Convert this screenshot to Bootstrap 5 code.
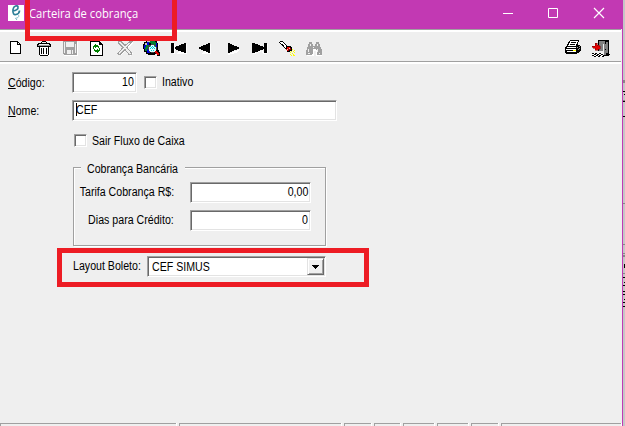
<!DOCTYPE html>
<html lang="pt-BR">
<head>
<meta charset="utf-8">
<title>Carteira de cobrança</title>
<link href="https://cdn.jsdelivr.net/npm/bootstrap@5.3.0/dist/css/bootstrap.min.css" rel="stylesheet">
<style>
html,body{height:426px;overflow:hidden}
body{background:#c6c6c6;font:12.5px/16px "Liberation Sans",Arial,sans-serif;color:#000}
.win{width:623px;height:426px;background:#efefef;border-right:1px solid #c239b3}
.titlebar{height:29px;width:623px;background:#c239b3;color:#fff}
.app-logo{margin:4px 5px 0 8px}
.win-buttons{margin:5px 13px 0 auto}
.caption{font:12px/16px "Open Sans",sans-serif;margin-top:-2px;transform-origin:left;transform:scaleX(.935)}
.tools{height:35px;border-top:1px solid #a0a0a0;border-bottom:2px solid #fff;box-shadow:inset 0 2px #fff,inset 0 -1px #a0a0a0;padding:4px 10px 0 8px;gap:9px;margin-right:1px}
svg{display:block;flex:none}
.tools svg{shape-rendering:crispEdges}
.t,.tr{display:inline-block;white-space:nowrap;transform:scaleX(.85);transform-origin:left}
.tr{transform-origin:right}
.line{height:28px}
.key{width:64px}
.field{height:21px;background:#fff;border:1px solid;border-color:#a0a0a0 #fff #fff #a0a0a0;box-shadow:inset 1px 1px #696969,inset -1px -1px #e3e3e3;padding:1px 2px 0}
.raise{margin-top:-2px}
.combo{padding-top:2px}
.tick{width:13px;height:13px;background:#fff;border:1px solid;border-color:#a0a0a0 #fff #fff #a0a0a0;box-shadow:inset 1px 1px #696969,inset -1px -1px #e3e3e3;flex:none}
.caret{width:1px;height:13px;background:#000;margin:1px -1px 0 1px}
.group{margin:10px 0 0 73px;width:253px;height:79px;border:1px solid #a0a0a0;box-shadow:1px 1px #fff,inset 1px 1px #fff}
.legend-text{width:104px;height:16px;margin:-7px 0 0 7px;padding-left:6px;background:#efefef}
.drop{width:17px;height:17px;background:#efefef;border:1px solid;border-color:#e3e3e3 #696969 #696969 #e3e3e3;box-shadow:inset 1px 1px #fff,inset -1px -1px #a0a0a0;margin:-1px -1px 0 0}
.status{height:3px;gap:3px;width:621px}
.status>div{border-top:1px solid #a0a0a0;border-left:1px solid #a0a0a0;box-shadow:1px 0 #fff}
.mark-a,.mark-b{position:absolute;border:5px solid #ed1c24}
.mark-a{left:25px;top:-6px;width:152px;height:47px}
.mark-b{left:57px;top:248px;width:312px;height:39px}
.behind{position:absolute;left:623px;top:0;shape-rendering:crispEdges}
</style>
<script src="https://cdn.jsdelivr.net/npm/bootstrap@5.3.0/dist/js/bootstrap.bundle.min.js"></script>
</head>
<body>
<div class="win d-flex flex-column">
 <header class="titlebar d-flex align-items-center flex-shrink-0">
  <svg class="app-logo align-self-start" width="16" height="17" viewBox="0 0 16 17"><path fill="#fff" d="M0 1h16v16H0z"/><g fill="none" stroke="#2d7f98"><path stroke-width="1.7" d="M5 7C8 7 10.500 5 10 2.700 9.500 1 5.500 1.500 5 5.500 4.500 9.500 6 11 8 10.500 10 10 11.500 8 11.500 6.500"/><path stroke="#7db5c7" d="M10.500 11c1 2-1 3-3 3.300l1.500 1.700"/></g></svg>
  <div class="caption text-nowrap">Carteira de cobrança</div>
  <svg class="win-buttons align-self-start" width="110" height="16" viewBox="500 5 110 16" fill="none" stroke="#fff"><path d="M503 13.500h10M548.500 8.500h9v9h-9z"/><path stroke-width="1.200" d="m594 8 10 10m0-10-10 10"/></svg>
 </header>
 <nav class="tools d-flex align-items-center flex-shrink-0">
  <svg width="18" height="18"><path fill="#000" d="M2 2h8v1h1v1h1v1h1v10H2z"/><path fill="#fff" d="M3 3h6v3h3v8H3z"/><path d="M10 4h1v1h-1z" fill="#fff"/></svg>
  <svg width="18" height="18"><path fill="#fff" d="M4 8h11v9H5z"/><path d="M7 2h4v1h1v1h3v1h1v3H2V5h1V4h3V3h1z"/><path fill="#efefef" d="M7 3h4v1H7zM4 5h10v1H4z"/><path fill="#999" d="M3 6h12v1H3z"/><path d="M4 8h1v8H4zm9 0h1v8h-1zM5 16h8v1H5zM6 9h1v6H6zm2 0h1v6H8zm3 0h1v6h-1z"/></svg>
  <svg width="18" height="18"><path fill="#fff" d="M2 3h14v14H2z"/><path fill="#a0a0a0" d="M1 2h14v14H2v-1H1z"/><path fill="#efefef" d="M2 3h1v11H2zM4 3h8v5H4zM13 5h1v9h-1zM5 11h4v4H5zM10 11h1v4h-1z"/></svg>
  <svg width="18" height="18"><path d="M1 2h10v1h1v1h1v1h1v12H1z"/><path fill="#fff" d="M2 3h8v3h3v10H2z"/><path fill="#008000" d="M6 5h1v1h2v1h1v2H9V8H7v1H6V8H5v2H4V7h1V6h1zM8 10h1v1h1V9h1v3h-1v1H9v1H8v-1H6v-1H5v-2h1v1h2z"/></svg>
  <svg width="18" height="18"><path fill="none" stroke="#fff" stroke-width="4" d="m4 4 12 12M16 3 4 15"/><path fill="#efefef" stroke="#a0a0a0" d="M2 2.500h3l4 4 5-4h2l-5 6 4 5v2h-2l-4-5-5 5H3l-1-1 5-6-5-5z"/></svg>
  <svg width="18" height="18"><path d="M4 1h8v1h2v2h1v7h1v2h1v4h-3v-2h-2v1H5v-1H3v-2H1v-3H0V5h1V3h2V2h1z"/><path fill="#0000d8" d="M4 2h3v2H6v2H5v3h2v5H4v-2H2v-2H1V6h1V4h2zM12 3h1v1h1v4h-1V6h-1z"/><path fill="#008030" d="M7 2h5v1h1v3h-2V5H8V4H6V3h1zM3 6h3v4H4v2H2V8h1z"/><path fill="#c6c6c6" d="M4 2h3v1H4zM2 4h2v2H2z"/><circle cx="9.500" cy="9.500" r="4" fill="#dff" stroke="#444"/><path fill="#00cfd8" d="M7 7h1v1H7zm2 0h1v1H9zm2 0h1v1h-1zM8 8h1v1H8zm2 0h1v1h-1zM7 9h1v1H7zm2 0h1v1H9zm2 0h1v1h-1zm-3 2h1v1H8zm2 0h1v1h-1z"/><path fill="#e00000" d="M12 12h2v1h1v1h1v2h-2v-1h-1v-1h-1z"/></svg>
  <svg width="18" height="18"><path fill="#fff" d="M3 5h2v10H3zM16 5h1v10H7z"/><path d="M1 4h3v10H1zM16 4v10h-2v-1h-3v-1H8v-1H6v-1H5V8h1V7h3V6h2V5h3V4z"/></svg>
  <svg width="18" height="18"><path fill="#fff" d="M13 5h1v10H5z"/><path d="M13 4v10h-2v-1H9v-1H6v-1H4v-1H2V8h2V7h2V6h3V5h2V4z"/></svg>
  <svg width="18" height="18"><path fill="#fff" d="M4 14h3l9-4-4 4-8 2z"/><path d="M4 4h2v1h2v1h2v1h3v1h2v2h-2v1h-3v1H8v1H6v1H4z"/></svg>
  <svg width="18" height="18"><path fill="#fff" d="M2 14h3l7-3 1 3h4V5h-1v10h-4l-1-3-7 3H2z"/><path d="M1 4h3v1h3v1h2v1h3v1h1v2h-1v1H9v1H7v1H4v1H1zM13 4h3v10h-3z"/></svg>
  <svg width="18" height="18"><path d="M2 2h3v1h1v1h1v1h1v1h1v1h4v1h1v4h-2v1H9v-2H8v-1H7V9H6V8H5V7H4V6H3V5H2V4H1V3h1z"/><path fill="#fff" d="M2 3h3v1h1v1h1v1h1v2H7V7H6V6H5V5H3V4H2zM6 7h1v1h1v1H7V8H6z"/><path fill="#e00000" d="M9 8h3v1h-1v2h-1v1H9v-1H8v-1h1z"/><path fill="#ffc5b0" d="M11 9h1v1h-1zM9 10h1v1H9z"/><path fill="#900" d="M12 9h1v2h-2v1h-1v-2h2z"/><path fill="#ff0" d="M14 10h1v1h-1zm2 1h1v1h-1zm-3 1h1v1h-1zm2 0h1v1h-1zm-3 1h1v1h-1zm2 1h1v1h-1zm2-1h1v1h-1zm-4 2h1v1h-1zm3 0h1v1h-1zm-2 1h1v1h-1zm2 0h2v1h-2z"/></svg>
  <svg width="18" height="18"><path fill="#fff" d="M4 4h3v4h4V4h3v3l3 5v5h-6v-5H9v5H2v-5z"/><path fill="#a0a0a0" d="M4 3h3v2h1v2h2V5h1V3h3v2h1v3h1v2h1v6h-5v-5h-1v-1H8v5H7v1H1v-5h1V8h1V5h1z"/><path fill="#efefef" d="M5 5h1v2H5zM3 10h1v3H3zM8 8h1v1H8zM12 5h1v2h-1zM12 10h1v3h-1zM3 14h2v1H3zM14 14h1v1h-1z"/></svg>
  <svg class="ms-auto" width="18" height="18"><path d="M6 1h9v2h-1v3h2v1h1v5h-1v1h-1v1h-2v1H2v-1H1V8h1V7h1V5h1V3h1V2h1z"/><path fill="#fff" d="M6 2h8v1h-1v2h-1v2H4V6h1V4h1zM3 8h9v1H3zM2 10h10v1H2zM3 12h9v1H3z"/><path d="M7 3h5v1H7zM6 5h5v1H6z"/><path fill="#ff0" d="M9 11h3v1H9z"/><path fill="#999" d="M13 8h1v1h-1zm2-1h1v1h-1zm-1 3h1v1h-1zm1-1h1v1h-1z"/></svg>
  <svg width="20" height="19" viewBox="0 0 20 19"><path d="M7 1h11v16h-6v-5H7z"/><path fill="#808080" d="M8 2h6v10H8zM13 5h2V3h2v11h-2v2h-2z"/><path fill="#efefef" d="M12 5h1v11h-1z"/><path d="M14 10h1v1h-1z"/><path fill="#e00000" stroke="#700" stroke-width=".5" d="M1 7h3V4h2v2h2v1h1v3H7v1H4V9H2z"/><path fill="#fff" d="M1 14h11v4H3v-1H1z"/><path d="M1 14h2v1H1zm3 0h2v1H4zm4 0h2v1H8zM3 15h2v1H3zm3 0h2v1H6zm4 0h2v1h-2zM1 16h2v1H1zm4 0h2v1H5zm3 0h2v1H8zM3 17h2v1H3zm4 0h2v1H7zm4 0h2v1h-2zM15 16h3v1h-3zM17 15h2v1h-2z"/></svg>
 </nav>
 <main class="flex-grow-1" style="padding-top:5px">
  <div class="line d-flex align-items-center ps-2">
   <div class="key"><span class="t"><u>C</u>ódigo:</span></div>
   <div class="field raise text-end" style="width:65px"><span class="tr">10</span></div>
   <div class="tick raise" style="margin-left:7px;margin-right:5px"></div><span class="t raise">Inativo</span>
  </div>
  <div class="line d-flex align-items-center ps-2">
   <div class="key"><span class="t"><u>N</u>ome:</span></div>
   <div class="field raise d-flex" style="width:265px"><div class="caret"></div><span class="t">CEF</span></div>
  </div>
  <div class="d-flex align-items-center" style="height:32px;padding:0 0 1px 74px">
   <div class="tick" style="margin-right:5px"></div><span class="t">Sair Fluxo de Caixa</span>
  </div>
  <section class="group">
   <div class="legend-text"><span class="t">Cobrança Bancária</span></div>
   <div class="line d-flex align-items-center" style="margin-top:1px">
    <div class="d-flex justify-content-end" style="width:100px"><span class="tr">Tarifa Cobrança R$:</span></div>
    <div class="field text-end" style="width:121px;margin-left:16px"><span class="tr">0,00</span></div>
   </div>
   <div class="line d-flex align-items-center">
    <div class="d-flex justify-content-end" style="width:100px"><span class="tr">Dias para Crédito:</span></div>
    <div class="field text-end" style="width:121px;margin-left:16px"><span class="tr">0</span></div>
   </div>
  </section>
  <div class="line d-flex align-items-center" style="margin-top:6px;padding-left:73px">
   <div style="width:74px"><span class="t">Layout Boleto:</span></div>
   <div class="field combo d-flex justify-content-between" style="width:179px"><span class="t" style="margin-left:2px">CEF SIMUS</span><div class="drop"><svg width="15" height="15" shape-rendering="crispEdges"><path d="M4 6h7v1h-1v1H9v1H8v1H7V9H6V8H5V7H4z"/></svg></div></div>
  </div>
 </main>
 <footer class="status d-flex flex-shrink-0">
  <div style="width:176px"></div><div style="width:162px"></div><div style="width:27px"></div><div style="width:26px"></div><div style="width:31px"></div><div style="width:31px"></div><div style="width:27px"></div><div class="flex-grow-1"></div>
 </footer>
</div>
<svg class="behind" width="2" height="426"><path fill="#888" d="M0 80h2v3H0zM0 100h2v1H0zM0 203h2v1H0zM0 244h2v1H0zM0 253h2v1H0zM0 255h2v2H0zM0 273h2v1H0z"/><path d="M0 101h2v1H0zM0 116h2v1H0zM0 91h2v1H0zM1 94h1v1H1zM1 264h1v4H1zM0 277h2v1H0zM1 282h1v1H1zM0 285h2v1H0zM0 291h2v1H0zM0 294h2v1H0zM1 299h1v1H1zM0 302h2v1H0zM0 306h2v1H0z"/></svg>
<div class="mark-a"></div><div class="mark-b"></div>
</body>
</html>
